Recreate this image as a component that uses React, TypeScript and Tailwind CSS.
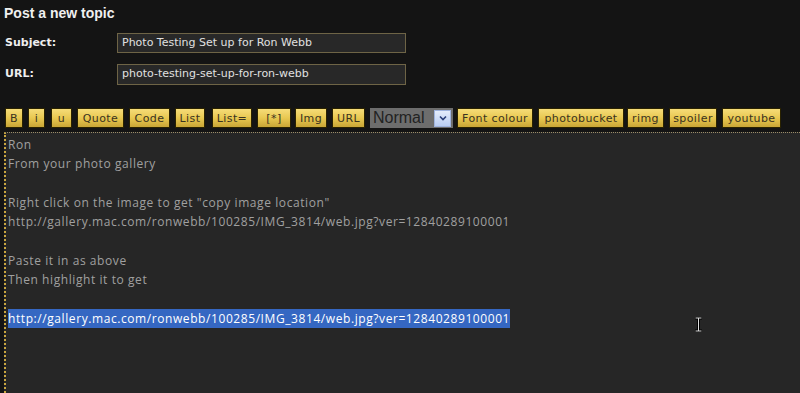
import React from "react";

type B = { label: string; cls: string };

const btns1: B[] = [
  { label: "B", cls: "w-[18px] ml-[5px]" },
  { label: "i", cls: "w-[17px] ml-[5px]" },
  { label: "u", cls: "w-[21px] ml-[6px]" },
  { label: "Quote", cls: "w-[47px] ml-[5px]" },
  { label: "Code", cls: "w-[41px] ml-[5px]" },
  { label: "List", cls: "w-[30px] ml-[5px]" },
  { label: "List=", cls: "w-[40px] ml-[7px]" },
  { label: "[*]", cls: "w-[34px] ml-[5px]" },
  { label: "Img", cls: "w-[32px] ml-[4px]" },
  { label: "URL", cls: "w-[33px] ml-[5px]" },
];
const btns2: B[] = [
  { label: "Font colour", cls: "w-[76px] ml-[4px]" },
  { label: "photobucket", cls: "w-[86px] ml-[5px]" },
  { label: "rimg", cls: "w-[37px] ml-[3px]" },
  { label: "spoiler", cls: "w-[48px] ml-[5px]" },
  { label: "youtube", cls: "w-[59px] ml-[5px]" },
];

function Btn({ b }: { b: B }) {
  return (
    <div
      className={
        b.cls +
        " shrink-0 h-[20px] flex items-center justify-center whitespace-nowrap border border-[#2a2200] bg-gradient-to-b from-[#f6dc78] via-[#e8c850] to-[#c9a536] text-[#3a3320] text-[11px] leading-none tracking-[0.4px]"
      }
    >
      {b.label}
    </div>
  );
}

export default function App() {
  const font = { fontFamily: '"DejaVu Sans", Verdana, sans-serif' };
  return (
    <div className="w-[800px] h-[393px] overflow-hidden bg-[#141414] flex flex-col" style={font}>
      <div
        className="pl-[4px] pt-[5px] text-[14px] font-bold text-[#f0f0f0] leading-[17px]"
        style={{ fontFamily: '"Liberation Sans", Arial, sans-serif' }}
      >
        Post a new topic
      </div>
      <div className="flex items-center mt-[11px] h-[20px]">
        <div className="w-[117px] pl-[5px] text-[11px] font-bold text-[#eeeeee]">Subject:</div>
        <div className="w-[289px] h-[20px] border border-[#6e6446] bg-[#282828] text-[#e0e0e0] text-[11px] flex items-center pl-[4px]">
          Photo Testing Set up for Ron Webb
        </div>
      </div>
      <div className="flex items-center mt-[11px] h-[21px]">
        <div className="w-[117px] pl-[5px] text-[11px] font-bold text-[#eeeeee]">URL:</div>
        <div className="w-[289px] h-[21px] border border-[#6e6446] bg-[#282828] text-[#e0e0e0] text-[11px] flex items-center pl-[4px]">
          photo-testing-set-up-for-ron-webb
        </div>
      </div>
      <div className="flex items-center mt-[23px] h-[20px]">
        {btns1.map((b) => (
          <Btn key={b.label} b={b} />
        ))}
        <div className="shrink-0 ml-[5px] h-[20px] w-[83px] bg-[#6d6d6d] flex items-center justify-between pl-[3px] pr-[2px]">
          <span
            className="text-[16px] text-[#222222] leading-none"
            style={{ fontFamily: '"Liberation Sans", Arial, sans-serif' }}
          >
            Normal
          </span>
          <span className="w-[17px] h-[17px] bg-gradient-to-b from-[#e4ecfb] to-[#b9cdf3] border border-[#9fb3de] flex items-center justify-center">
            <svg width="8" height="6" viewBox="0 0 8 6">
              <path d="M1 1.5 L4 4.5 L7 1.5" stroke="#2b3f7a" strokeWidth="1.6" fill="none" />
            </svg>
          </span>
        </div>
        {btns2.map((b) => (
          <Btn key={b.label} b={b} />
        ))}
      </div>
      <div
        className="mt-[4px] ml-[4px] flex-1 relative bg-[#262626] border-l-2 border-t border-dotted border-l-[#c9a640] border-t-[#9a8c68] pl-[2px] pt-[2px] text-[12px] leading-[19.3px] tracking-[0.58px] text-[#a0a0a0]"
        style={{ fontFamily: '"Open Sans", sans-serif' }}
      >
        <div>Ron</div>
        <div>From your photo gallery</div>
        <div>&nbsp;</div>
        <div>Right click on the image to get "copy image location"</div>
        <div>http://gallery.mac.com/ronwebb/100285/IMG_3814/web.jpg?ver=12840289100001</div>
        <div>&nbsp;</div>
        <div>Paste it in as above</div>
        <div>Then highlight it to get</div>
        <div>&nbsp;</div>
        <div>
          <span className="bg-[#3567c2] text-white py-[1px]">
            http://gallery.mac.com/ronwebb/100285/IMG_3814/web.jpg?ver=12840289100001
          </span>
        </div>
        <svg className="absolute left-[688px] top-[184px]" width="9" height="15" viewBox="0 0 9 15">
          <path d="M1 1 H8 M4.5 1 V14 M1 14 H8" stroke="#000" strokeWidth="3" fill="none" />
          <path d="M1.5 1 H7.5 M4.5 1 V14 M1.5 14 H7.5" stroke="#ddd" strokeWidth="1" fill="none" />
        </svg>
      </div>
    </div>
  );
}
